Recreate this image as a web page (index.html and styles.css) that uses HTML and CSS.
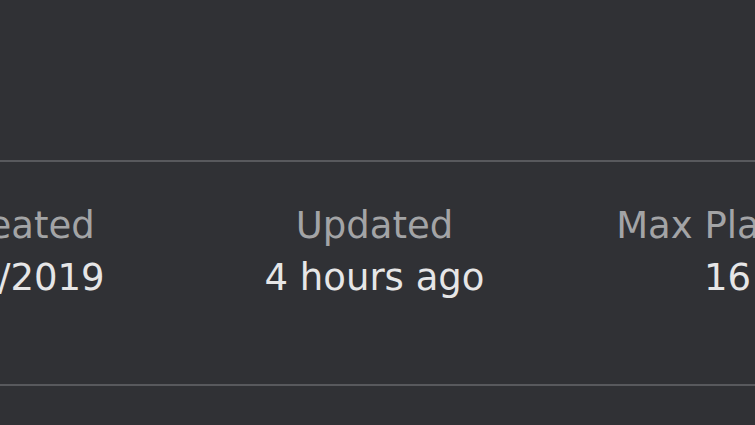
FILE: index.html
```html
<!DOCTYPE html>
<html lang="en">
<head>
    <meta charset="UTF-8">
    <meta name="viewport" content="width=device-width, initial-scale=1.0">
    <title>Game details</title>
    <link rel="stylesheet" href="styles.css">
</head>
<body>
    <div class="game-stats">
        <ul class="stat-list">
            <li class="stat">
                <p class="stat-label">Created</p>
                <p class="stat-value">3/7/2019</p>
            </li>
            <li class="stat">
                <p class="stat-label">Updated</p>
                <p class="stat-value">4 hours ago</p>
            </li>
            <li class="stat">
                <p class="stat-label">Max Players</p>
                <p class="stat-value">16</p>
            </li>
        </ul>
    </div>
</body>
</html>
```

FILE: styles.css
```css
body {
    margin: 0;
    background: #303135;
    font-family: "DejaVu Sans", "Noto Sans", sans-serif;
    overflow: hidden;
}
.game-stats {
    margin-top: 160px;
    border-top: 2px solid #58595d;
    border-bottom: 2px solid #58595d;
    height: 222px;
}
.stat-list {
    list-style: none;
    margin: 0 0 0 -6px;
    padding: 38px 0 0;
    display: flex;
    justify-content: center;
}
.stat {
    flex: 0 0 353px;
    text-align: center;
    white-space: nowrap;
}
.stat-label {
    margin: 0;
    font-size: 37px;
    line-height: 52px;
    color: #a3a4a6;
}
.stat-value {
    margin: 0;
    font-size: 37px;
    line-height: 52px;
    color: #e6e6e7;
}
```
